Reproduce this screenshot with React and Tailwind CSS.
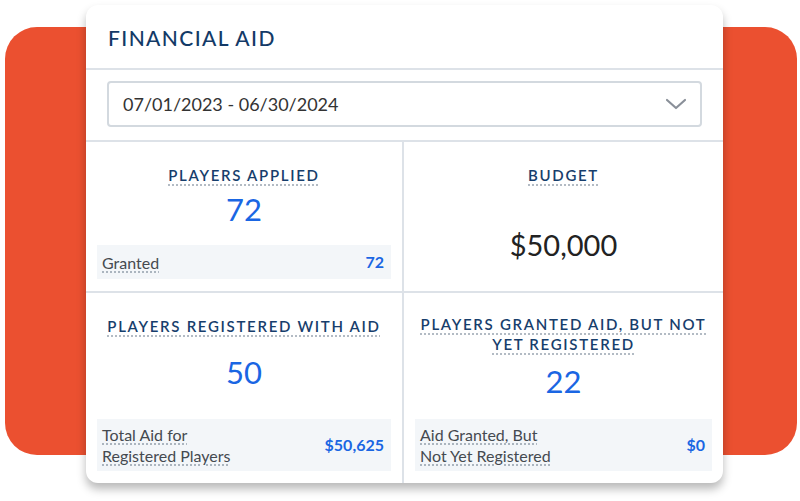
import React from "react";

function Stat({ title, value, label, amount, titleWidth }) {
  return (
    <div className="flex flex-col h-full px-[11px] pt-[21px] pb-[12px]">
      <div className="text-center">
        <span
          className={`inline-block ${titleWidth || ""} text-[15px] leading-[20px] font-semibold tracking-[1.7px] text-[#173e6c] underline decoration-dotted decoration-[#9aa5b1] underline-offset-[4px]`}
        >
          {title}
        </span>
      </div>
      <div className="flex-1 flex items-center justify-center pb-[13px]">
        <span className="text-[#1a66e3] text-[31px] leading-none">{value}</span>
      </div>
      {label && (
        <div className="flex items-center justify-between bg-[#f3f6f9] pl-[5px] pr-[7px] py-[5px] min-h-[32px]">
          <span className="text-[16px] leading-[21px] text-[#454a50] underline decoration-dotted decoration-[#9aa5b1] underline-offset-[3px]">
            {label}
          </span>
          <span className="text-[16px] font-bold text-[#1a66e3]">{amount}</span>
        </div>
      )}
    </div>
  );
}

export default function App() {
  return (
    <div
      className="relative w-[800px] h-[501px] bg-white overflow-hidden"
      style={{ fontFamily: "Lato, 'Open Sans', sans-serif" }}
    >
      <div className="absolute left-[5px] top-[27px] w-[792px] h-[428px] rounded-[32px] bg-[#eb5030]"></div>

      <div className="relative ml-[86px] mt-[5px] w-[637px] h-[478px] bg-white rounded-[12px] shadow-[0_6px_10px_rgba(0,0,0,0.28)] flex flex-col overflow-hidden">
        <div className="h-[65px] border-b-2 border-[#dde2e8] flex items-center pl-[22px]">
          <h1 className="text-[21px] font-medium tracking-[1.4px] text-[#133a67] mt-[3px]">FINANCIAL AID</h1>
        </div>

        <div className="h-[72px] border-b-2 border-[#dde2e8] px-[21px] pt-[11px]">
          <div className="h-[46px] rounded-[4px] border-2 border-[#d3d9df] flex items-center justify-between pl-[14px] pr-[12px]">
            <span className="text-[18px] text-[#333]">07/01/2023 - 06/30/2024</span>
            <svg width="24" height="24" viewBox="0 0 24 24" fill="none" stroke="#8a9099" strokeWidth="2.2" strokeLinecap="round" strokeLinejoin="round">
              <path d="M3 8l9 8 9-8" />
            </svg>
          </div>
        </div>

        <div className="flex-1 grid grid-cols-[318px_1fr] grid-rows-[151px_1fr]">
          <div className="border-r-2 border-b-2 border-[#dde2e8]">
            <Stat title="PLAYERS APPLIED" value="72" label="Granted" amount="72" />
          </div>
          <div className="border-b-2 border-[#dde2e8]">
            <div className="flex flex-col h-full px-[11px] pt-[21px]">
              <div className="text-center">
                <span className="inline-block text-[15px] leading-[20px] font-semibold tracking-[1.7px] text-[#173e6c] underline decoration-dotted decoration-[#9aa5b1] underline-offset-[4px]">
                  BUDGET
                </span>
              </div>
              <div className="mt-[43px] text-center text-[29px] leading-none text-[#222]">$50,000</div>
            </div>
          </div>
          <div className="border-r-2 border-[#dde2e8]">
            <Stat
              title="PLAYERS REGISTERED WITH AID"
              value="50"
              label={
                <>
                  Total Aid for
                  <br />
                  Registered Players
                </>
              }
              amount="$50,625"
            />
          </div>
          <div>
            <Stat
              title="PLAYERS GRANTED AID, BUT NOT YET REGISTERED"
              titleWidth="max-w-[300px]"
              value="22"
              label={
                <>
                  Aid Granted, But
                  <br />
                  Not Yet Registered
                </>
              }
              amount="$0"
            />
          </div>
        </div>
      </div>
    </div>
  );
}
